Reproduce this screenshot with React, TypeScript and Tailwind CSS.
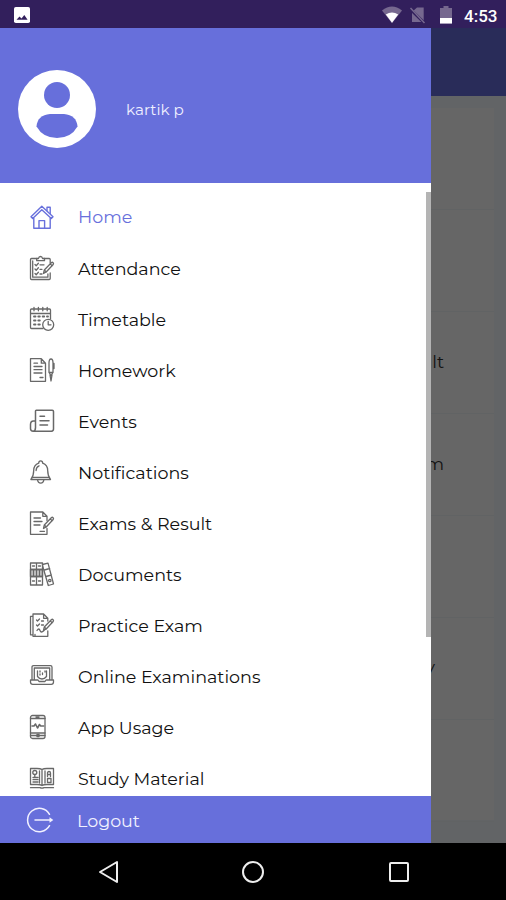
import type { ReactNode } from 'react';

const FONT = "font-['Montserrat','Inter','Liberation_Sans',sans-serif]";

function Glyph({ children, active }: { children: ReactNode; active?: boolean }) {
  return (
    <svg
      viewBox="0 0 26 26"
      className={`mb-[2px] h-[26px] w-[26px] shrink-0 ${active ? 'text-[#6870dc]' : 'text-[#686868]'}`}
      fill="none"
      stroke="currentColor"
      strokeWidth="1.3"
      strokeLinecap="round"
      strokeLinejoin="round"
    >
      {children}
    </svg>
  );
}

const pencil = (
  <path d="M14.5 18.5l.8-3.5 7-7.3q1-.8 1.8 0t.1 1.8l-7 7.5-2.7 1.5zM15.3 15l2 2M21.2 8.9l2 1.9" fill="white" />
);

const items: { label: string; icon: ReactNode }[] = [
  {
    label: 'Home',
    icon: (
      <>
        <path d="M2 12.7L12.8 2.3 24 12.7l-1.7 1.8-9.5-8.8L3.7 14.5zM4.8 14v10.2h16.4V14" strokeWidth="1.4" />
        <path d="M18 6.5V3.2h3.2v6.4M10 24v-7.4h5.6V24" strokeWidth="1.4" />
      </>
    ),
  },
  {
    label: 'Attendance',
    icon: (
      <>
        <path d="M8 3.5H2.5q-1 0-1 1v19q0 1 1 1h17.7q1 0 1-1V18M15 3.5h5.2q1 0 1 1V8" />
        <path d="M3.7 5.8v16.4h15.2V19M7.7 5.7h7.8V3.5h-2q-.3-2-2-2t-2 2H7.7z" />
        <path d="M6 9.500l1.200 1.200 2.200-2.500M11 9.800h4M6 14l1.200 1.200 2.200-2.500M11 14.300h2M6 18.500l1.200 1.200 2.200-2.500M11 19h2" />
        {pencil}
      </>
    ),
  },
  {
    label: 'Timetable',
    icon: (
      <>
        <path d="M14 22.500H2.500q-1 0-1-1V4q0-1 1-1h18q1 0 1 1v9M1.500 7.500h20M5 1.300v3.500M9.400 1.300v3.500M13.800 1.300v3.500M18.200 1.300v3.500" />
        <path d="M5 10.500h1.500M9.300 10.500h1.500M13.700 10.500h1.500M18 10.500h1M5 14.500h1.500M9.300 14.500h1.500M5 18.500h1.500M9.300 18.500h1.500" strokeWidth="1.900" />
        <circle cx="19.200" cy="18.800" r="5.500" fill="white" />
        <path d="M19.200 15.500v3.300H22" />
      </>
    ),
  },
  {
    label: 'Homework',
    icon: (
      <>
        <path d="M1.500 1.700h10.800l4.200 4.500v18.100h-15zM12.300 1.700v4.500h4.200M5 6.200h3.500M5 9.500h8M5 12.700h8M5 16h8M11 20.500h3" />
        <path d="M20 6q0-4 2-4t2 4v9.500l-2 3-2-3zM20 15.500h4M21 18l1 6 1-6M24 6.500h1v5" />
      </>
    ),
  },
  {
    label: 'Events',
    icon: (
      <>
        <path d="M6.500 20V3q0-.8.800-.8h16q1.200 0 1.200 1.200v17.700q0 2-2 2.200H4.200q-2.700 0-2.700-2.800v-4q0-3.500 3-3.500h2M6.500 19.500q0 3.600-2.500 3.800" strokeWidth="1.500" />
        <path d="M11 8.300h4.500M11 12.700h9M11 17h7.500" strokeWidth="1.500" />
      </>
    ),
  },
  {
    label: 'Notifications',
    icon: (
      <>
        <path d="M9.700 4.200q0-2.300 2-2.300t2 2.300q5 1.800 5 7.300 0 5.500 2.800 9H1.900q2.800-3.500 2.800-9 0-5.500 5-7.300z" />
        <path d="M8.500 20.700q.5 3.500 3.200 3.500t3.200-3.500M7.100 11.500q0-3.500 3-4.700M3.800 18.400h15.900" />
      </>
    ),
  },
  {
    label: 'Exams & Result',
    icon: (
      <>
        <path d="M18 18.500v5.800H1.500V2h12.300l4.200 4.300v4.200M13.800 2v4.300H18M5 8h6.500M5 11.500h8M5 15h6M11 21.300h4.500" />
        {pencil}
      </>
    ),
  },
  {
    label: 'Documents',
    icon: (
      <>
        <path d="M1.500 8.500h12v7h-12z" fill="#cccccc" />
        <path d="M1.500 2h6v22h-6zM7.500 2h6v22h-6zM1.500 8.500h12M1.500 15.500h12M4.500 8.500v7M10.500 8.500v7M3.500 20h2M9.500 20h2M3.500 5h2M9.500 5h2" />
        <path d="M13.500 3.500l5.500-1.300L24.500 23l-5.200 1.500-5.800-20M15.300 9l5.400-1.500M17 15.500l5.400-1.500" />
        <circle cx="20.800" cy="19.500" r="1.200" />
      </>
    ),
  },
  {
    label: 'Practice Exam',
    icon: (
      <>
        <path d="M3.500 4.300h-2v18.500h2M18.800 19v5.300H4V2h10.600l4.200 4.300V9M14.600 2v4.300h4.200M6 24.300v-2M7.500 8l1 1 2-2M7.500 13l1 1 2-2M12.500 9h2M12.500 13h2M8 18.500q2-3 3 0t4 0" />
        {pencil}
      </>
    ),
  },
  {
    label: 'Online Examinations',
    icon: (
      <>
        <path d="M3 17V4.200q0-1.500 1.500-1.500h17Q23 2.700 23 4.200V17M5.300 17V5h15.400v12M1.500 17H9l1 1.500h6l1-1.500h7.500v2q0 2.300-2.300 2.300H3.800q-2.300 0-2.300-2.300z" />
        <path d="M8.500 8v5.500q2 2.500 4.500 2.500t4.500-2.500V8M11 8v1M11 11v1M13.500 10v1.500M16 8v1" />
      </>
    ),
  },
  {
    label: 'App Usage',
    icon: (
      <>
        <rect x="1.500" y="1.500" width="14.500" height="23" rx="2" />
        <path d="M1.500 4.500H16M1.500 19H16M1.500 21.500H16M7 3h3" />
        <path d="M3 12h2l1.500-2 2 4 2-3.500 1.200 1.500h3" strokeWidth="1.600" />
        <path d="M8 20.500h2v2H8z" />
      </>
    ),
  },
  {
    label: 'Study Material',
    icon: (
      <>
        <path d="M13 3.500q-1.500-1-5-1H1.500v16H8q3.500 0 5 1 1.500-1 5-1h6.500v-16H18q-3.500 0-5 1zM13 3.500v16M1.500 21.700h9.500q2 1 4 0h9.500" />
        <circle cx="5.800" cy="6.500" r="2" />
        <path d="M4 11.500h5M4 13.700h5M4 16h5M10.500 5v12M16 5v12M18.500 10.500V7q0-1.500 1.500-1.500t1.500 1.500v3.500M18.500 8.500h3M18.500 12.500h3.500v4h-3.500zM5.800 9v2" />
      </>
    ),
  },
];

function StatusBar() {
  return (
    <header className="flex h-[28px] shrink-0 items-center bg-[#321f5c] pr-[8px] pl-[14px] text-white">
      <svg viewBox="0 0 16 16" className="mt-[2px] h-[16px] w-[16px]">
        <rect width="16" height="16" rx="1.800" fill="white" />
        <path d="M2.500 12.800l3-3.300 2 2L10.300 8l3.300 4.800z" fill="#321f5c" />
      </svg>
      <svg viewBox="0 0 22 18" className="mt-[2px] ml-auto h-[18px] w-[22px]">
        <path d="M1 4.600Q11-3.400 21 4.600L11 17.300z" fill="#76688f" />
        <path d="M4.800 8.600Q11 4.500 17.200 8.600L11 16.800z" fill="white" />
      </svg>
      <svg viewBox="0 0 16 18" className="mt-[2px] ml-[7px] h-[18px] w-[16px]">
        <path d="M7 1.500h6.700V16H2V6z" fill="#76688f" />
        <path d="M0 3l14.500 14" stroke="#321f5c" strokeWidth="3" />
        <path d="M.5 2l14 15" stroke="#76688f" strokeWidth="1.500" />
      </svg>
      <svg viewBox="0 0 12 18" className="mt-[2px] ml-[14px] h-[18px] w-[12px]">
        <path d="M3.500 0h5v2H12v15.500H0V2h3.500z" fill="#76688f" />
        <path d="M0 12h12v5.500H0z" fill="white" />
      </svg>
      <span className="ml-[12px] w-[34px] pt-[3px] font-[Roboto,sans-serif] text-[17px] leading-[20px] font-medium whitespace-nowrap">4:53</span>
    </header>
  );
}

function DimmedPage() {
  const cells = ['', '', 'Result', 'Exam', '', 'Library', ''];
  return (
    <div className="flex h-full flex-col bg-[#626466]">
      <div className="h-[68px] shrink-0 bg-[#292c59]" />
      <div className="mt-[12px] mr-[12px] h-[712px] bg-[#666666]">
        {cells.map((cell, i) => (
          <div
            key={i}
            className={`flex h-[102px] items-center justify-end border-b border-[#616364] text-[17.5px] text-[#111111] ${FONT} ${
              cell === 'Library' ? 'pr-[59px] pb-[3px]' : 'pr-[50px]'
            }`}
          >
            {cell}
          </div>
        ))}
      </div>
    </div>
  );
}

function Drawer() {
  return (
    <aside className={`absolute inset-y-0 left-0 flex w-[431px] flex-col bg-white ${FONT}`}>
      <div className="flex h-[155px] shrink-0 items-center bg-[#676fdb] pt-[7px] pl-[18px]">
        <svg viewBox="0 0 78 78" className="h-[78px] w-[78px]">
          <circle cx="39" cy="39" r="39" fill="white" />
          <circle cx="39" cy="25" r="13" fill="#676fdb" />
          <path d="M32 44h14q12.500 1 13.500 12.500Q53 68 39 68T18.500 56.500Q19.500 45 32 44z" fill="#676fdb" />
        </svg>
        <span className="ml-[30px] pt-[3px] text-[15.2px] text-[#f0f0ff]">kartik p</span>
      </div>
      <div className="flex min-h-0 flex-1 justify-between overflow-hidden pt-[9px]">
        <nav className="pl-[29px]">
          {items.map((item, i) => (
            <div key={item.label} className="flex h-[51.1px] items-center">
              <Glyph active={i === 0}>{item.icon}</Glyph>
              <span
                className={`ml-[23px] text-[17.5px] whitespace-nowrap ${
                  i === 0 ? 'text-[#6870dc]' : 'text-[#111111]'
                }`}
              >
                {item.label}
              </span>
            </div>
          ))}
        </nav>
        <div className="h-[445px] w-[5px] bg-[#b4b4b4]" />
      </div>
      <div className="flex h-[47px] shrink-0 items-center bg-[#676fdb] pt-[3px] pl-[26px] text-[#f1f1ff]">
        <svg viewBox="0 0 28 26" className="mb-[2px] h-[26px] w-[28px]" fill="none" stroke="currentColor" strokeWidth="1.500" strokeLinecap="round">
          <path d="M23.500 7.300A11.700 11.700 0 1 0 23.500 18.700M9 13h15" />
          <path d="M23.500 10.300L27.300 13l-3.800 2.700z" fill="currentColor" stroke="none" />
        </svg>
        <span className="ml-[23px] text-[17.5px]">Logout</span>
      </div>
    </aside>
  );
}

export default function App() {
  return (
    <div className="flex h-[900px] w-[506px] flex-col overflow-hidden bg-black">
      <StatusBar />
      <main className="relative h-[815px] shrink-0">
        <DimmedPage />
        <Drawer />
      </main>
      <footer className="flex h-[57px] items-center bg-black pl-[98px]">
        <svg viewBox="0 0 22 24" className="h-[24px] w-[22px]" fill="none" stroke="#eeeeee" strokeWidth="2" strokeLinejoin="round">
          <path d="M2 12L19 2v20z" />
        </svg>
        <svg viewBox="0 0 24 24" className="ml-[121px] h-[24px] w-[24px]" fill="none" stroke="#eeeeee" strokeWidth="2">
          <circle cx="12" cy="12" r="10" />
        </svg>
        <svg viewBox="0 0 22 22" className="ml-[123px] h-[22px] w-[22px]" fill="none" stroke="#eeeeee" strokeWidth="2">
          <rect x="2" y="2" width="18" height="18" rx="1" />
        </svg>
      </footer>
    </div>
  );
}
